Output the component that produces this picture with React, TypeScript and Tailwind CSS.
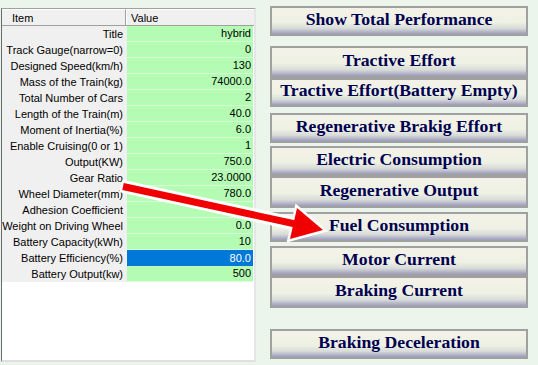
import React from "react";

const rows: [string, string][] = [
  ["Title", "hybrid"],
  ["Track Gauge(narrow=0)", "0"],
  ["Designed Speed(km/h)", "130"],
  ["Mass of the Train(kg)", "74000.0"],
  ["Total Number of Cars", "2"],
  ["Length of the Train(m)", "40.0"],
  ["Moment of Inertia(%)", "6.0"],
  ["Enable Cruising(0 or 1)", "1"],
  ["Output(KW)", "750.0"],
  ["Gear Ratio", "23.0000"],
  ["Wheel Diameter(mm)", "780.0"],
  ["Adhesion Coefficient", ""],
  ["Weight on Driving Wheel", "0.0"],
  ["Battery Capacity(kWh)", "10"],
  ["Battery Efficiency(%)", "80.0"],
  ["Battery Output(kw)", "500"],
];

// label, height, top margin
const buttons: [string, string, string][] = [
  ["Show Total Performance", "h-[30px]", "mt-[6px]"],
  ["Tractive Effort", "h-[32px]", "mt-[10px]"],
  ["Tractive Effort(Battery Empty)", "h-[29px]", "mt-0"],
  ["Regenerative Brakig Effort", "h-[30px]", "mt-[6px]"],
  ["Electric Consumption", "h-[30px]", "mt-[3px]"],
  ["Regenerative Output", "h-[32px]", "mt-0"],
  ["Fuel Consumption", "h-[30px]", "mt-[4px]"],
  ["Motor Current", "h-[30px]", "mt-[4px]"],
  ["Braking Current", "h-[32px]", "mt-0"],
  ["Braking Deceleration", "h-[30px]", "mt-[21px]"],
];

function PropertyGrid() {
  return (
    <div className="mt-[8px] ml-[1px] w-[255px] h-[354px] border-l border-l-[#6b6b6b] border-t border-t-[#a0a0a0] border-r-2 border-r-[#e6e6e6] border-b-2 border-b-[#e0e0e0] bg-white font-['Liberation_Sans',sans-serif] text-[11px] text-black">
      <div className="flex h-[17px] bg-[#f0f0f0] border-b border-b-[#a0a0a0]">
        <div className="w-[124px] pl-[10px] leading-[16px] border-t border-t-white border-r border-r-[#a0a0a0]">Item</div>
        <div className="flex-1 pl-[4px] leading-[16px] border-t border-t-white border-l border-l-white">Value</div>
      </div>
      {rows.map(([k, v], i) => {
        const selected = i === 14;
        return (
          <div key={k} className="flex h-[16px]">
            <div className="w-[125px] pr-[4px] text-right leading-[16px] bg-[#f0f0f0] whitespace-nowrap">{k}</div>
            <div
              className={
                selected
                  ? "w-[126px] pr-[2px] text-right leading-[16px] bg-[#0078d7] text-white border-b border-b-[#0078d7]"
                  : "w-[126px] pr-[2px] text-right leading-[15px] bg-[#b4fcb4] border-b border-b-[#d8fcd8]"
              }
            >
              {v}
            </div>
          </div>
        );
      })}
    </div>
  );
}

function Arrow() {
  return (
    <svg className="absolute left-0 top-0 pointer-events-none" width="538" height="365" viewBox="0 0 538 365">
      <line x1="121" y1="186" x2="300" y2="225" stroke="white" strokeWidth="13" />
      <polygon points="323,230 297,208 290,239" fill="white" stroke="white" strokeWidth="5" strokeLinejoin="miter" />
      <line x1="123" y1="186.5" x2="300" y2="225" stroke="#f00000" strokeWidth="7" />
      <polygon points="323,230 297,208 290,239" fill="#f00000" />
    </svg>
  );
}

export default function App() {
  return (
    <div className="relative w-[538px] h-[365px] bg-[#ebf5eb] overflow-hidden">
      <div className="flex">
        <PropertyGrid />
        <div className="ml-[14px] w-[258px] flex flex-col">
          {buttons.map(([label, h, mt]) => (
            <div
              key={label}
              className={`${h} ${mt} flex items-center justify-center border-2 border-[#a0a0a0] bg-[linear-gradient(to_bottom,#f4f2e8_0%,#eef1e4_55%,#d8dbd8_78%,#9c9cbc_100%)] font-['Liberation_Serif',serif] font-bold text-[17.7px] text-[#000050] leading-none pb-[3px] whitespace-nowrap`}
            >
              {label}
            </div>
          ))}
        </div>
      </div>
      <Arrow />
    </div>
  );
}
